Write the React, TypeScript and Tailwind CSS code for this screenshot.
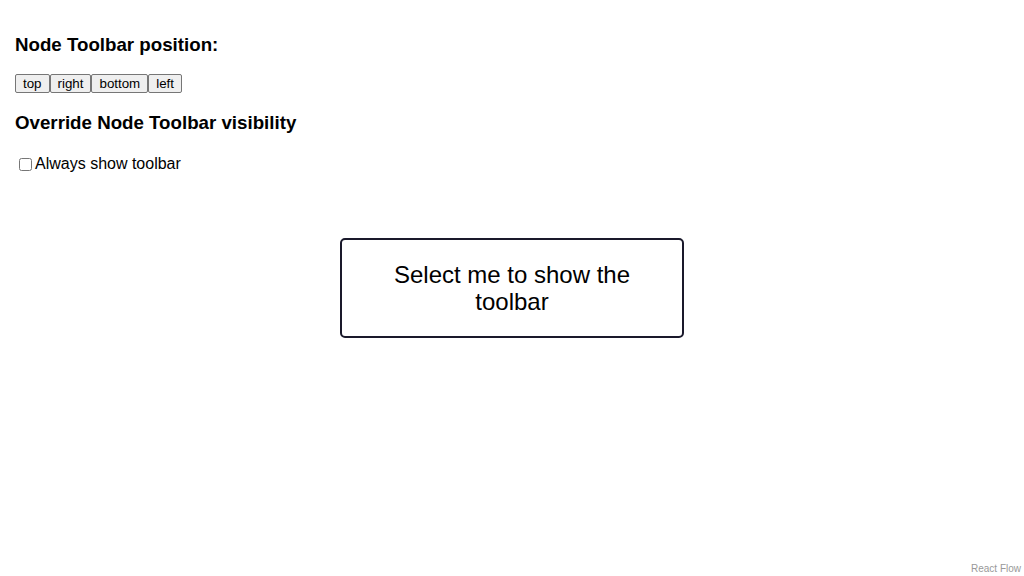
export default function App() {
  const positions = ["top", "right", "bottom", "left"];

  return (
    <div
      className="relative w-[1024px] h-[576px] bg-white overflow-hidden text-black"
      style={{ fontFamily: '"Liberation Sans", Arial, sans-serif' }}
    >
      {/* controls panel */}
      <div className="flex flex-col items-start pl-[15px]">
        <h3 className="mt-[34px] text-[18.72px] leading-[22px] font-bold">Node Toolbar position:</h3>
        <div className="mt-[18px] flex">
          {positions.map((p) => (
            <button
              key={p}
              className="h-[19px] px-[7px] text-[13.333px] leading-[15px] bg-[#efefef] border border-[#767676] rounded-[2px]"
            >
              {p}
            </button>
          ))}
        </div>
        <h3 className="mt-[19px] text-[18.72px] leading-[22px] font-bold">Override Node Toolbar visibility</h3>
        <label className="mt-[21px] ml-[4px] flex items-center text-[16px] leading-[18px]">
          <input type="checkbox" className="w-[13px] h-[13px] mr-[3px]" />
          Always show toolbar
        </label>
      </div>

      {/* node on the flow canvas */}
      <div className="absolute left-[340px] top-[238px] w-[344px] h-[100px] flex items-center justify-center px-[40px] border-2 border-[#1a192b] rounded-[5px] bg-white">
        <div className="text-center text-[24px] leading-[27px]">Select me to show the toolbar</div>
      </div>

      <div className="absolute right-[1px] bottom-0 text-[10px] text-[#999] bg-white/50 px-[2px]">React Flow</div>
    </div>
  );
}
